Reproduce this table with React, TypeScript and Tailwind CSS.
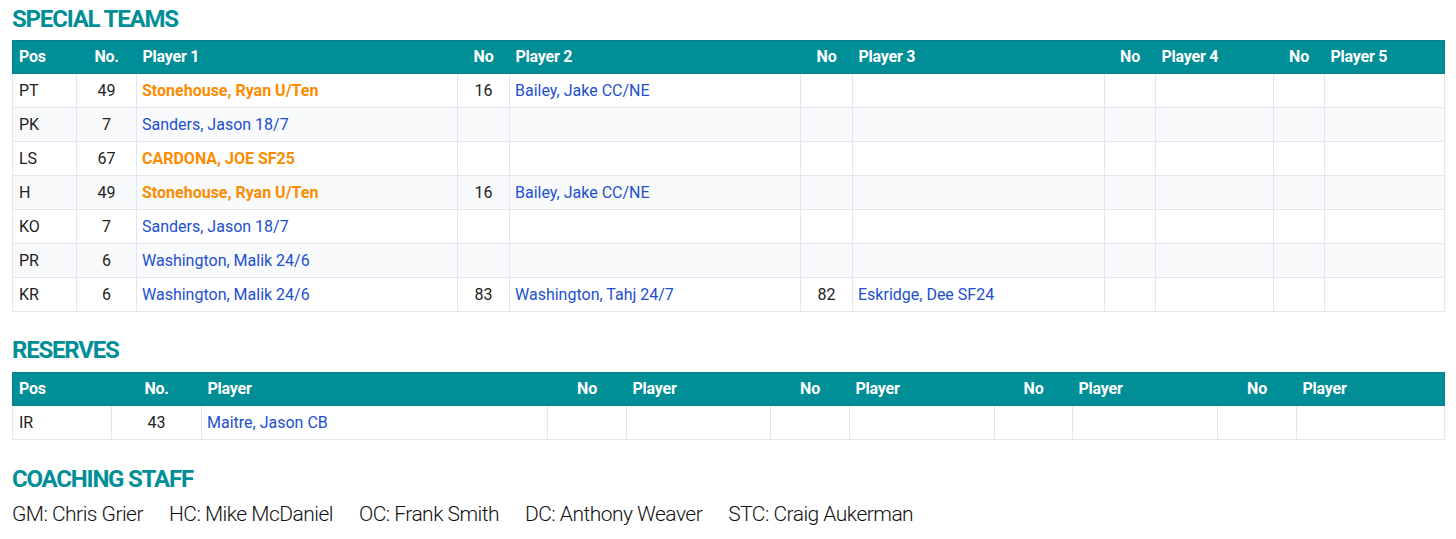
type Cell = { no?: string; name?: string; hot?: boolean };

const specialCols = [64, 60, 321, 52, 291, 52, 252, 51, 118, 51, 120];
const specialHead = ["Pos", "No.", "Player 1", "No", "Player 2", "No", "Player 3", "No", "Player 4", "No", "Player 5"];

const special: { pos: string; players: Cell[] }[] = [
	{ pos: "PT", players: [{ no: "49", name: "Stonehouse, Ryan U/Ten", hot: true }, { no: "16", name: "Bailey, Jake CC/NE" }] },
	{ pos: "PK", players: [{ no: "7", name: "Sanders, Jason 18/7" }] },
	{ pos: "LS", players: [{ no: "67", name: "CARDONA, JOE SF25", hot: true }] },
	{ pos: "H", players: [{ no: "49", name: "Stonehouse, Ryan U/Ten", hot: true }, { no: "16", name: "Bailey, Jake CC/NE" }] },
	{ pos: "KO", players: [{ no: "7", name: "Sanders, Jason 18/7" }] },
	{ pos: "PR", players: [{ no: "6", name: "Washington, Malik 24/6" }] },
	{
		pos: "KR",
		players: [
			{ no: "6", name: "Washington, Malik 24/6" },
			{ no: "83", name: "Washington, Tahj 24/7" },
			{ no: "82", name: "Eskridge, Dee SF24" },
		],
	},
];

const reserveCols = [99, 90, 346, 79, 144, 79, 145, 78, 145, 79, 148];
const reserveHead = ["Pos", "No.", "Player", "No", "Player", "No", "Player", "No", "Player", "No", "Player"];
const reserves: { pos: string; players: Cell[] }[] = [{ pos: "IR", players: [{ no: "43", name: "Maitre, Jason CB" }] }];

const staff = ["GM: Chris Grier", "HC: Mike McDaniel", "OC: Frank Smith", "DC: Anthony Weaver", "STC: Craig Aukerman"];

const SectionTitle = ({ children }: { children: string }) => (
	<h2 className="text-[24px] leading-[32px] font-bold text-[#008e97] tracking-[-0.05em]">{children}</h2>
);

const RosterTable = ({ cols, head, rows }: { cols: number[]; head: string[]; rows: { pos: string; players: Cell[] }[] }) => (
	<table className="w-full table-fixed border-collapse text-[16px]">
		<colgroup>
			{cols.map((w, i) => (
				<col key={i} style={{ width: w }} />
			))}
		</colgroup>
		<thead>
			<tr className="h-[33px] bg-[#008e97] text-white">
				{head.map((h, i) => (
					<th
						key={i}
						className={`px-[6px] font-bold tracking-[-0.015em] border-y border-[#0b8088] first:border-l last:border-r ${
							i % 2 === 1 ? "text-center" : "text-left"
						}`}
					>
						{h}
					</th>
				))}
			</tr>
		</thead>
		<tbody>
			{rows.map((r, ri) => {
				const cells: Cell[] = Array.from({ length: 5 }, (_, k) => r.players[k] ?? {});
				return (
					<tr key={r.pos} className={`h-[34px] ${ri % 2 === 1 ? "bg-[#f9fafc]" : "bg-white"}`}>
						<td className="border border-[#e2e6ee] px-[6px] text-[#222]">{r.pos}</td>
						{cells.map((c, k) => [
							<td key={`n${k}`} className="border border-[#e2e6ee] px-[6px] text-center text-[#222]">
								{c.no}
							</td>,
							<td
								key={`p${k}`}
								className={`border border-[#e2e6ee] pl-[5px] pr-[6px] whitespace-nowrap ${
									c.hot ? "font-bold text-[#fb8c00]" : "text-[#1d4fd0]"
								}`}
							>
								{c.name}
							</td>,
						])}
					</tr>
				);
			})}
		</tbody>
	</table>
);

export default function App() {
	return (
		<div className="w-[1456px] min-h-[539px] bg-white px-3 pt-[3px] font-['Roboto',sans-serif]">
			<SectionTitle>SPECIAL TEAMS</SectionTitle>
			<div className="mt-[5px]">
				<RosterTable cols={specialCols} head={specialHead} rows={special} />
			</div>

			<div className="mt-[22px]">
				<SectionTitle>RESERVES</SectionTitle>
			</div>
			<div className="mt-[6px]">
				<RosterTable cols={reserveCols} head={reserveHead} rows={reserves} />
			</div>

			<div className="mt-[23px]">
				<SectionTitle>COACHING STAFF</SectionTitle>
			</div>
			<div className="mt-[5px] flex gap-[26px] text-[21px] leading-[28px] font-light text-[#111] tracking-[-0.025em]">
				{staff.map((s) => (
					<span key={s}>{s}</span>
				))}
			</div>
		</div>
	);
}
